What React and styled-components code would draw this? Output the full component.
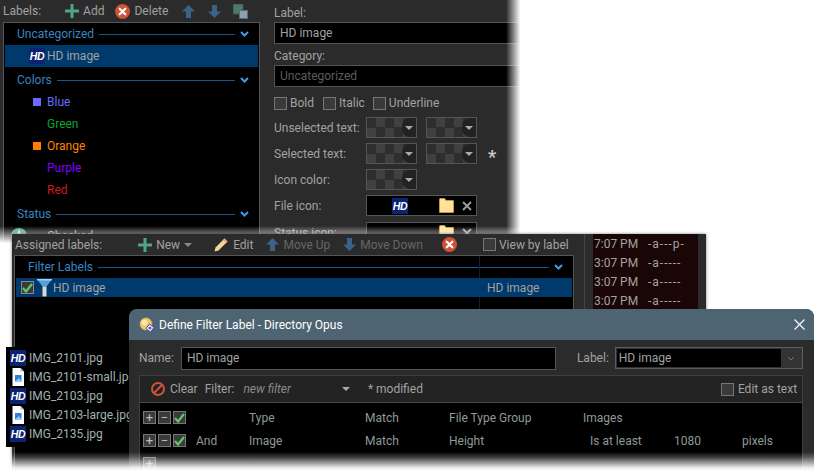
import React from 'react';
import styled, { createGlobalStyle } from 'styled-components';

const GlobalStyle = createGlobalStyle`
  html, body {
    margin: 0;
    background: #fff;
  }
`;

const Canvas = styled.div`
  position: relative;
  width: 816px;
  height: 470px;
  overflow: hidden;
  background: #fff;
  font-family: Roboto, "Noto Sans", sans-serif;
  font-size: 12px;
  line-height: 16px;
  color: #a2a2a2;
`;

// windows on the desktop
const BackWindow = styled.div`
  position: absolute;
  left: 0;
  top: 0;
  width: 522px;
  height: 246px;
  background: #2b2b2b;
  overflow: hidden;
  display: flex;
`;
const EdgeFadeRight = styled.div`
  position: absolute;
  left: 506px;
  top: 0;
  width: 16px;
  height: 246px;
  background: linear-gradient(to right, rgba(255,255,255,0), #fff 90%);
`;
const EdgeFadeBack = styled.div`
  position: absolute;
  left: 0;
  top: 226px;
  width: 522px;
  height: 20px;
  background: linear-gradient(to bottom, rgba(255,255,255,0), #fff 85%);
`;
const FrontWindow = styled.div`
  position: absolute;
  left: 12px;
  top: 234px;
  width: 694px;
  height: 236px;
  background: #2b2b2b;
  overflow: hidden;
  box-shadow: 0 0 3px rgba(0,0,0,.5);
`;
const FileListPanel = styled.div`
  position: absolute;
  left: 6px;
  top: 347px;
  width: 124px;
  height: 99px;
  padding-top: 1px;
  background: #000;
  overflow: hidden;
`;
const Dialog = styled.div`
  position: absolute;
  left: 129px;
  top: 309px;
  width: 685px;
  height: 161px;
  background: #2b2b2b;
  border-radius: 8px 8px 0 0;
  overflow: hidden;
`;
const BottomFade = styled.div`
  position: absolute;
  left: 0;
  top: 452px;
  width: 816px;
  height: 18px;
  background: linear-gradient(to bottom, rgba(255,255,255,0), rgba(255,255,255,.25) 30%, rgba(255,255,255,.95) 90%);
`;

// shared bits
const Toolbar = styled.div`
  display: flex;
  align-items: center;
  height: ${p => p.$h || 22}px;
  padding-left: ${p => p.$pl || 0}px;
`;
const Tool = styled.span`
  display: inline-flex;
  align-items: center;
  gap: ${p => p.$gap ?? 4}px;
  margin-left: ${p => p.$ml || 0}px;
  color: ${p => (p.$dim ? '#666' : '#a2a2a2')};
  white-space: nowrap;
`;
const Box = styled.span`
  display: inline-flex;
  align-items: center;
  justify-content: center;
  flex: none;
  box-sizing: border-box;
  width: ${p => p.$s || 13}px;
  height: ${p => p.$s || 13}px;
  border: 1px solid ${p => p.$line || '#777'};
  background: ${p => p.$bg || '#3a3a3a'};
`;
const Check = styled(Tool)`
  margin-right: ${p => p.$mr || 0}px;
`;

const LabelsColumn = styled.div`
  flex: none;
  width: 274px;
  padding-left: 3px;
  box-sizing: border-box;
`;
const ListBox = styled.div`
  width: 257px;
  height: 230px;
  box-sizing: border-box;
  background: #000;
  border: 1px solid #555;
  padding: 0 1px;
`;
const SectionRow = styled.div`
  display: flex;
  align-items: center;
  gap: 5px;
  height: 22px;
  padding: 0 9px 0 12px;
  margin-top: ${p => p.$mt || 0}px;
  color: #3a83c4;
`;
const SectionLine = styled.span`
  flex: 1;
  height: 1px;
  background: #17568c;
`;
const ItemRow = styled.div`
  display: flex;
  align-items: center;
  height: 22px;
  margin-top: ${p => p.$mt || 0}px;
  padding-left: ${p => p.$pl ?? 24}px;
  color: ${p => p.$color || '#a2a2a2'};
  background: ${p => (p.$selected ? '#00396b' : 'transparent')};
`;
const IconSlot = styled.span`
  display: inline-flex;
  align-items: center;
  justify-content: center;
  flex: none;
  width: 16px;
  height: 16px;
  margin-right: 2px;
`;
const ColorDot = styled.span`
  width: 8px;
  height: 8px;
  background: ${p => p.$color};
`;
const HdBadge = styled.span`
  display: inline-flex;
  align-items: center;
  justify-content: center;
  flex: none;
  width: 16px;
  height: 16px;
  background: repeating-conic-gradient(#0e2a86 0 25%, #0a1c5c 0 50%) 0 0 / 2px 2px;
  color: #fff;
  font-family: "Liberation Sans", sans-serif;
  font-size: 10.5px;
  line-height: 16px;
  font-weight: 700;
  font-style: italic;
  letter-spacing: -.3px;
`;

// label editor on the right of the back window
const EditorColumn = styled.div`
  flex: 1;
  min-width: 0;
  display: flex;
  flex-direction: column;
`;
const FieldCaption = styled.div`
  height: 16px;
  margin-top: ${p => p.$mt || 0}px;
`;
const TextInput = styled.div`
  box-sizing: border-box;
  height: 22px;
  margin-top: 1px;
  padding: 2px 5px;
  background: #000;
  border: 1px solid #555;
  color: ${p => (p.$muted ? '#5c5c5c' : '#a2a2a2')};
`;
const StyleChecks = styled.div`
  display: flex;
  align-items: center;
  height: 16px;
  margin-top: 8px;
`;
const FormRow = styled.div`
  display: flex;
  align-items: center;
  height: 21px;
  margin-top: ${p => p.$mt ?? 5}px;
`;
const FormLabel = styled.span`
  flex: none;
  width: 92px;
`;
const Swatch = styled.span`
  position: relative;
  flex: none;
  box-sizing: border-box;
  width: 51px;
  height: 21px;
  margin-right: ${p => p.$mr || 0}px;
  border: 1px solid #555;
  background: repeating-conic-gradient(#404040 0 25%, #2e2e2e 0 50%) 0 0 / 18px 19px;
`;
const SwatchCap = styled.span`
  position: absolute;
  right: 0;
  top: 0;
  bottom: 0;
  width: 14px;
  border-radius: 8px 0 0 8px;
  background: #222;
  display: flex;
  align-items: center;
  justify-content: center;
`;
const Caret = styled.span`
  width: 0;
  height: 0;
  border-left: 4px solid transparent;
  border-right: 4px solid transparent;
  border-top: 4px solid ${p => p.$color || '#aaa'};
`;
const Asterisk = styled.span`
  margin-left: 11px;
  padding-top: 6px;
  color: #c8c8c8;
  font-size: 18px;
  font-weight: 700;
`;
const IconField = styled.span`
  flex: none;
  box-sizing: border-box;
  width: 111px;
  height: 21px;
  background: #000;
  border: 1px solid #555;
  display: flex;
  align-items: center;
  padding-left: 25px;
`;

// assigned labels window
const AssignedList = styled.div`
  position: relative;
  box-sizing: border-box;
  width: 560px;
  height: 230px;
  margin-left: 2px;
  background: #000;
  border: 1px solid #555;
  padding: 0 1px;
`;
const ColumnLine = styled.span`
  position: absolute;
  left: 464px;
  top: 0;
  bottom: 0;
  width: 1px;
  background: #0b2238;
`;
const AssignedRow = styled.div`
  position: relative;
  display: flex;
  align-items: center;
  height: 19px;
  padding-left: 5px;
  background: #00396b;
`;
const AssignedName = styled.span`
  flex: none;
  width: 434px;
  margin-left: 1px;
`;
const SideLog = styled.div`
  position: absolute;
  left: 572px;
  top: 0;
  width: 105px;
  height: 236px;
  border-left: 1px solid #444;
  padding-left: 8px;
`;
const SideLogList = styled.div`
  height: 100%;
  background: #1a0606;
  color: #a2a2a2;
  padding-left: 1px;
  overflow: hidden;
`;
const LogRow = styled.div`
  display: flex;
  height: 19px;
  align-items: center;
  white-space: nowrap;
`;
const LogTime = styled.span`
  flex: none;
  width: 54px;
`;
const LogAttrs = styled.span`
  letter-spacing: 1px;
`;

const FileRow = styled.div`
  display: flex;
  align-items: center;
  height: 19px;
  padding-left: 4px;
  gap: 1px;
  white-space: nowrap;
  color: #a2b0b0;
`;

// filter label dialog
const TitleBar = styled.div`
  display: flex;
  align-items: center;
  height: 31px;
  padding: 0 9px 0 10px;
  background: #4f6472;
  color: #fff;
`;
const TitleText = styled.span`
  flex: 1;
  margin-left: 4px;
`;
const NameRow = styled.div`
  display: flex;
  align-items: center;
  height: 22px;
  margin-top: 7px;
  padding-left: 10px;
`;
const NameInput = styled.div`
  box-sizing: border-box;
  flex: none;
  width: 375px;
  height: 23px;
  margin-left: 7px;
  padding: 2px 5px;
  background: #000;
  border: 1px solid #555;
`;
const Combo = styled.div`
  display: flex;
  align-items: center;
  box-sizing: border-box;
  flex: none;
  width: 188px;
  height: 22px;
  margin-left: 6px;
  padding: 1px;
  border: 1px solid #5c5c5c;
  background: #333;
`;
const ComboText = styled.span`
  flex: 1;
  height: 100%;
  padding-left: 2px;
  background: #000;
  color: #a2a2a2;
  line-height: 18px;
`;
const ComboArrow = styled.span`
  display: flex;
  align-items: center;
  justify-content: center;
  width: 20px;
`;
const FilterPanel = styled.div`
  margin: 6px 11px 0 10px;
  border: 1px solid #3f3f3f;
  background: #000;
`;
const FilterBar = styled.div`
  display: flex;
  align-items: center;
  height: 26px;
  margin-bottom: 3px;
  background: #232323;
  border-bottom: 1px solid #4a4a4a;
  padding-left: 11px;
`;
const FilterRow = styled.div`
  display: grid;
  grid-template-columns: ${p => p.$cols};
  align-items: center;
  height: 23px;
  padding-left: 3px;
  color: #8f9a9a;
`;
const RowButtons = styled.span`
  display: flex;
  gap: 2px;
`;
const RowButton = styled(Box)`
  color: #bbb;
  font-size: 13px;
  line-height: 11px;
`;
const Indented = styled.span`
  display: inline-flex;
  padding-left: ${p => p.$pl || 0}px;
`;
const Italic = styled.span`
  font-style: italic;
  color: #8a8a8a;
`;

// icons
const PlusIcon = () => (
  <svg width="14" height="14" viewBox="0 0 14 14"><path d="M5.500 0h3v5.500H14v3H8.500V14h-3V8.500H0v-3h5.500z" fill="#4fa58a" /></svg>
);
const DeleteIcon = () => (
  <svg width="15" height="15" viewBox="0 0 15 15"><circle cx="7.500" cy="7.500" r="7.500" fill="#cf5138" /><path d="M4.700 4.700l5.600 5.600M10.300 4.700l-5.600 5.600" stroke="#fff" strokeWidth="2.200" strokeLinecap="round" /></svg>
);
const UpIcon = () => (
  <svg width="13" height="13" viewBox="0 0 13 13"><path d="M6.500 0L13 6.500H9V13H4V6.500H0z" fill="#3b6288" /></svg>
);
const DownIcon = () => (
  <svg width="13" height="13" viewBox="0 0 13 13"><path d="M6.500 13L13 6.500H9V0H4v6.500H0z" fill="#3b6288" /></svg>
);
const OverlapIcon = () => (
  <svg width="15" height="15" viewBox="0 0 15 15"><rect x="0" y="0" width="10" height="10" fill="#4a7a68" stroke="#3a5a50" /><rect x="6.500" y="6.500" width="8" height="8" fill="#8ba0b0" stroke="#5a6a78" /></svg>
);
const FolderIcon = () => (
  <svg width="15" height="15" viewBox="0 0 15 15"><path d="M.5 14.500V1.500q0-1 1-1h4l1.500 2h7q.5 0 .5.500v11.500z" fill="#fde39a" stroke="#c8953c" /></svg>
);
const CrossIcon = () => (
  <svg width="10" height="10" viewBox="0 0 10 10"><path d="M1 1l8 8M9 1l-8 8" stroke="#999" strokeWidth="2" /></svg>
);
const TickIcon = () => (
  <svg width="11" height="10" viewBox="0 0 11 10"><path d="M1 5l3 3.500L10 1" fill="none" stroke="#5fc96b" strokeWidth="2.200" /></svg>
);
const FunnelIcon = () => (
  <svg width="15" height="18" viewBox="0 0 15 18"><path d="M0 0h15L9.500 7.500H5.500z" fill="#5a9fd4" /><path d="M0 0h15v1.500H0z" fill="#a4cdec" /><rect x="5.500" y="7.500" width="4" height="10" fill="#d8d8d8" /></svg>
);
const PencilIcon = () => (
  <svg width="14" height="14" viewBox="0 0 14 14"><path d="M10.500.5l3 3L4.500 12.500 0.500 13.500l1-4z" fill="#f2d89a" /><path d="M10.500.5l3 3-1.500 1.500-3-3z" fill="#e8a860" /></svg>
);
const ChevronIcon = () => (
  <svg width="9" height="6" viewBox="0 0 9 6"><path d="M1 1l3.500 3.500L8 1" fill="none" stroke="#3b9cf0" strokeWidth="2" /></svg>
);
const BanIcon = () => (
  <svg width="14" height="14" viewBox="0 0 14 14"><circle cx="7" cy="7" r="6" fill="none" stroke="#cf5138" strokeWidth="2" /><path d="M2.800 11.200l8.400-8.400" stroke="#cf5138" strokeWidth="2" /></svg>
);
const FileIcon = () => (
  <svg width="16" height="18" viewBox="0 0 16 18"><path d="M2.500 0h8L14 3.500V18H2.500z" fill="#fff" /><path d="M10.500 0v3.500H14z" fill="#bbb" /><rect x="5" y="7" width="6.500" height="6.500" fill="#2f7fe0" /><path d="M5 13.500L9 10l2.500 3.500z" fill="#9ccaf5" /></svg>
);
const CloseIcon = () => (
  <svg width="11" height="11" viewBox="0 0 11 11"><path d="M.5.5l10 10M10.500.5l-10 10" stroke="#fff" strokeWidth="1.100" /></svg>
);
const OpusIcon = () => (
  <svg width="16" height="16" viewBox="0 0 16 16"><circle cx="7" cy="7" r="6.500" fill="#f2c95a" stroke="#6a6a8a" /><circle cx="5.500" cy="5.500" r="3" fill="#fbe9a8" /><path d="M10.500 7l4.500 3.500L11.500 15 7 11.500z" fill="#eef0ff" stroke="#4a4aa0" /><circle cx="11" cy="11" r="1.500" fill="#5a5ac0" /></svg>
);
const GreenStatus = () => (
  <svg width="16" height="16" viewBox="0 0 16 16"><circle cx="8" cy="8" r="8" fill="#4fa58a" /><path d="M8 1l2 5H6z" fill="#cfe8df" /></svg>
);
const SmallCaret = () => (
  <svg width="8" height="5" viewBox="0 0 8 5"><path d="M1 1l3 3 3-3" fill="none" stroke="#777" /></svg>
);

const Section = ({ name, mt }) => (
  <SectionRow $mt={mt}>
    {name}
    <SectionLine />
    <ChevronIcon />
  </SectionRow>
);

const ColorSwatch = ({ mr }) => (
  <Swatch $mr={mr}>
    <SwatchCap><Caret /></SwatchCap>
  </Swatch>
);

const colors = [
  { name: 'Blue', color: '#6a6aff', dot: true },
  { name: 'Green', color: '#0ca42c' },
  { name: 'Orange', color: '#ff8000', dot: true },
  { name: 'Purple', color: '#8000ff' },
  { name: 'Red', color: '#d01818' },
];
const logs = [
  ['7:07 PM', '-a---p-'],
  ['3:07 PM', '-a-----'],
  ['3:07 PM', '-a-----'],
  ['3:07 PM', '-a-----'],
];
const files = [
  ['IMG_2101.jpg', true],
  ['IMG_2101-small.jpg', false],
  ['IMG_2103.jpg', true],
  ['IMG_2103-large.jpg', false],
  ['IMG_2135.jpg', true],
];
const filterCols = '53px 53px 116px 84px 141px 84px 68px 1fr';

const App = () => (
  <Canvas>
    <GlobalStyle />

    <BackWindow>
      <LabelsColumn>
        <Toolbar>
          Labels:
          <Tool $ml={24}><PlusIcon />Add</Tool>
          <Tool $ml={11}><DeleteIcon />Delete</Tool>
          <Tool $ml={14}><UpIcon /></Tool>
          <Tool $ml={13}><DownIcon /></Tool>
          <Tool $ml={12}><OverlapIcon /></Tool>
        </Toolbar>
        <ListBox>
          <Section name="Uncategorized" />
          <ItemRow $selected><IconSlot><HdBadge>HD</HdBadge></IconSlot>HD image</ItemRow>
          <Section name="Colors" mt={2} />
          {colors.map(c => (
            <ItemRow key={c.name} $color={c.color}>
              <IconSlot>{c.dot && <ColorDot $color={c.color} />}</IconSlot>
              {c.name}
            </ItemRow>
          ))}
          <Section name="Status" mt={2} />
          <ItemRow $pl={6}>
            <GreenStatus />
            <Indented $pl={20}>Checked</Indented>
          </ItemRow>
        </ListBox>
      </LabelsColumn>

      <EditorColumn>
        <FieldCaption $mt={5}>Label:</FieldCaption>
        <TextInput>HD image</TextInput>
        <FieldCaption $mt={4}>Category:</FieldCaption>
        <TextInput $muted>Uncategorized</TextInput>
        <StyleChecks>
          <Check $gap={3} $mr={9}><Box />Bold</Check>
          <Check $gap={3} $mr={8}><Box />Italic</Check>
          <Check $gap={3}><Box />Underline</Check>
        </StyleChecks>
        <FormRow $mt={6}>
          <FormLabel>Unselected text:</FormLabel>
          <ColorSwatch mr={9} />
          <ColorSwatch />
        </FormRow>
        <FormRow>
          <FormLabel>Selected text:</FormLabel>
          <ColorSwatch mr={9} />
          <ColorSwatch />
          <Asterisk>*</Asterisk>
        </FormRow>
        <FormRow>
          <FormLabel>Icon color:</FormLabel>
          <ColorSwatch />
        </FormRow>
        <FormRow>
          <FormLabel>File icon:</FormLabel>
          <IconField>
            <HdBadge>HD</HdBadge>
            <Tool $ml={31}><FolderIcon /></Tool>
            <Tool $ml={8}><CrossIcon /></Tool>
          </IconField>
        </FormRow>
        <FormRow $mt={6}>
          <FormLabel>Status icon:</FormLabel>
          <IconField>
            <Tool $ml={47}><FolderIcon /></Tool>
            <Tool $ml={8}><CrossIcon /></Tool>
          </IconField>
        </FormRow>
      </EditorColumn>
    </BackWindow>
    <EdgeFadeRight />
    <EdgeFadeBack />

    <FrontWindow>
      <Toolbar $h={21} $pl={3}>
        Assigned labels:
        <Tool $ml={36} $gap={4}><PlusIcon />New<Caret $color="#888" /></Tool>
        <Tool $ml={22} $gap={5}><PencilIcon />Edit</Tool>
        <Tool $ml={13} $dim $gap={4}><UpIcon />Move Up</Tool>
        <Tool $ml={13} $dim $gap={4}><DownIcon />Move Down</Tool>
        <Tool $ml={19}><DeleteIcon /></Tool>
        <Tool $ml={26} $gap={3}><Box />View by label</Tool>
      </Toolbar>
      <AssignedList>
        <ColumnLine />
        <SectionRow>
          Filter Labels
          <SectionLine />
          <ChevronIcon />
        </SectionRow>
        <AssignedRow>
          <Box $line="#888"><TickIcon /></Box>
          <Indented $pl={3}><FunnelIcon /></Indented>
          <AssignedName>HD image</AssignedName>
          HD image
        </AssignedRow>
      </AssignedList>
      <SideLog>
        <SideLogList>
          {logs.map((l, i) => (
            <LogRow key={i}>
              <LogTime>{l[0]}</LogTime>
              <LogAttrs>{l[1]}</LogAttrs>
            </LogRow>
          ))}
        </SideLogList>
      </SideLog>
    </FrontWindow>

    <FileListPanel>
      {files.map(f => (
        <FileRow key={f[0]}>
          <IconSlot>{f[1] ? <HdBadge>HD</HdBadge> : <FileIcon />}</IconSlot>
          {f[0]}
        </FileRow>
      ))}
    </FileListPanel>

    <Dialog>
      <TitleBar>
        <OpusIcon />
        <TitleText>Define Filter Label - Directory Opus</TitleText>
        <CloseIcon />
      </TitleBar>
      <NameRow>
        Name:
        <NameInput>HD image</NameInput>
        <Tool $ml={21}>Label:</Tool>
        <Combo>
          <ComboText>HD image</ComboText>
          <ComboArrow><SmallCaret /></ComboArrow>
        </Combo>
      </NameRow>
      <FilterPanel>
        <FilterBar>
          <Tool $gap={5}><BanIcon />Clear</Tool>
          <Tool $ml={7} $gap={9}>Filter: <Italic>new filter</Italic></Tool>
          <Tool $ml={51}><Caret /></Tool>
          <Tool $ml={18}>* modified</Tool>
          <Tool $ml={298} $gap={4}><Box />Edit as text</Tool>
        </FilterBar>
        <FilterRow $cols="53px 53px 116px 84px 134px 1fr">
          <RowButtons><RowButton>+</RowButton><RowButton>−</RowButton><RowButton><TickIcon /></RowButton></RowButtons>
          <span />
          <span>Type</span>
          <span>Match</span>
          <span>File Type Group</span>
          <span>Images</span>
        </FilterRow>
        <FilterRow $cols={filterCols}>
          <RowButtons><RowButton>+</RowButton><RowButton>−</RowButton><RowButton><TickIcon /></RowButton></RowButtons>
          <span>And</span>
          <span>Image</span>
          <span>Match</span>
          <span>Height</span>
          <span>Is at least</span>
          <span>1080</span>
          <span>pixels</span>
        </FilterRow>
        <FilterRow $cols={filterCols}>
          <RowButtons><RowButton>+</RowButton></RowButtons>
        </FilterRow>
      </FilterPanel>
    </Dialog>
    <BottomFade />
  </Canvas>
);

export default App;
